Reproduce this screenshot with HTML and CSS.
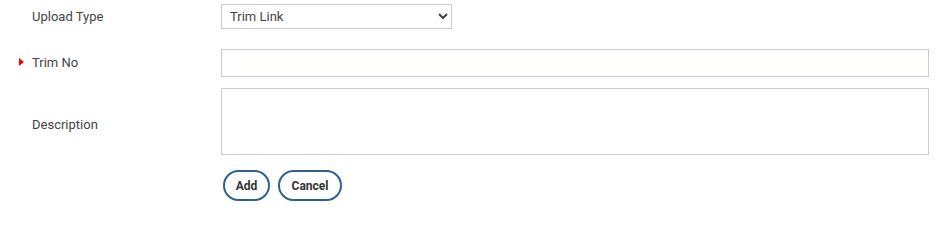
FILE: index.html
```html
<!DOCTYPE html>
<html lang="en">
<head>
    <meta charset="UTF-8">
    <meta name="viewport" content="width=device-width, initial-scale=1.0">
    <title>Upload</title>
    <link rel="stylesheet" href="styles.css">
</head>
<body>
    <form class="upload-form">
        <div class="row row-type">
            <label class="label" for="uploadType">Upload Type</label>
            <div class="field">
                <select id="uploadType" class="select">
                    <option>Trim Link</option>
                    <option>File</option>
                </select>
            </div>
        </div>
        <div class="row row-trim">
            <label class="label required" for="trimNo">Trim No</label>
            <div class="field">
                <input type="text" id="trimNo" class="input">
            </div>
        </div>
        <div class="row row-desc">
            <label class="label" for="description">Description</label>
            <div class="field">
                <textarea id="description" class="textarea"></textarea>
            </div>
        </div>
        <div class="row row-actions">
            <span class="label"></span>
            <div class="field buttons">
                <button type="button" class="btn btn-add">Add</button>
                <button type="button" class="btn btn-cancel">Cancel</button>
            </div>
        </div>
    </form>
</body>
</html>
```

FILE: styles.css
```css
body {
    margin: 0;
    font-family: Roboto, "Liberation Sans", Arial, sans-serif;
    font-size: 13px;
    color: #444;
    background-color: #fff;
}

.upload-form {
    padding-top: 4px;
    width: 929px;
}

.row {
    display: flex;
    align-items: center;
}

.row-trim {
    margin-top: 20px;
}

.row-desc {
    margin-top: 11px;
}

.row-actions {
    margin-top: 15px;
}

.label {
    position: relative;
    width: 189px;
    padding-left: 32px;
    flex-shrink: 0;
}

.row-trim .label {
    padding-bottom: 2px;
}

.row-desc .label {
    padding-top: 5px;
}

/* red marker for required fields */
.required::before {
    content: "";
    position: absolute;
    left: 19px;
    top: 50%;
    margin-top: -5px;
    border-top: 4px solid transparent;
    border-bottom: 4px solid transparent;
    border-left: 5px solid #f00;
}

.field {
    flex: 1;
}

.select {
    width: 231px;
    height: 25px;
    border: 1px solid #c5ccd6;
    border-radius: 0;
    background-color: #fff;
    font-family: inherit;
    font-size: 13px;
    color: #444;
    padding: 0 4px;
}

.input,
.textarea {
    display: block;
    box-sizing: border-box;
    width: 100%;
    border: 1px solid #c5ccd6;
    font-family: inherit;
    font-size: 13px;
    margin: 0;
}

.input {
    height: 28px;
}

.textarea {
    height: 67px;
    resize: none;
}

.buttons {
    display: flex;
    gap: 8px;
    padding-left: 2px;
}

.btn {
    height: 31px;
    border: 2px solid #2e6190;
    border-radius: 16px;
    background-color: #fff;
    font-family: inherit;
    font-size: 12px;
    font-weight: bold;
    color: #333;
    padding: 0;
}

.btn-add {
    width: 47px;
}

.btn-cancel {
    width: 64px;
}
```
